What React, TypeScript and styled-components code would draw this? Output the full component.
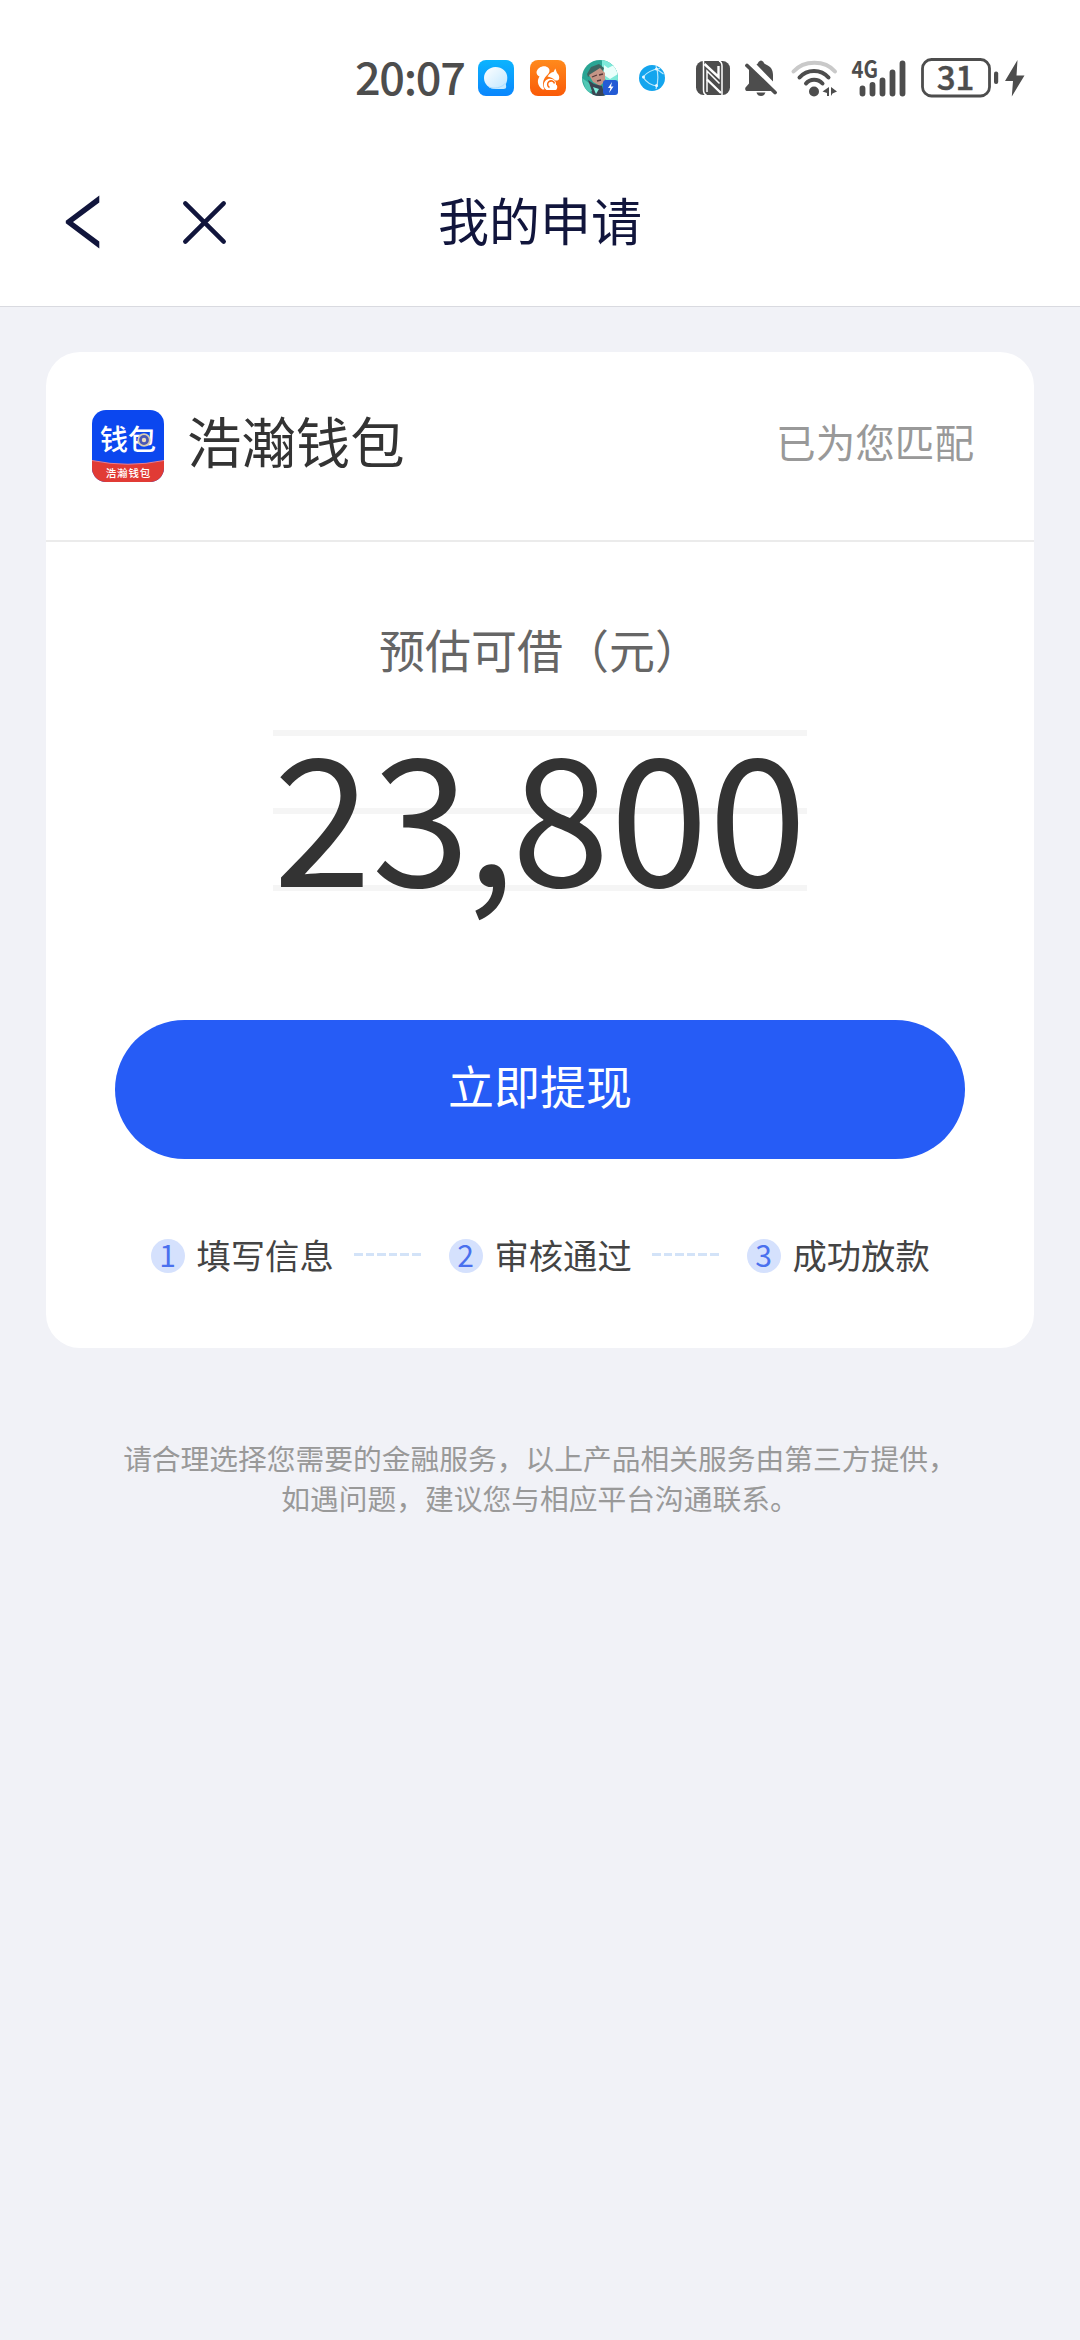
import React from "react";
import styled, { createGlobalStyle } from "styled-components";

const ink = "#4d4d4d";

const GlobalStyle = createGlobalStyle`
  * { box-sizing: border-box; }
  body {
    margin: 0;
    background: #f1f2f7;
    font-family: "Noto Sans CJK SC", "Noto Sans", sans-serif;
  }
  button { border: 0; padding: 0; background: none; font-family: inherit; }
  svg { display: block; flex: none; overflow: visible; }
`;

const Page = styled.div`
  width: 1080px;
  min-height: 2340px;
  background: #f1f2f7;
`;

const Top = styled.header`
  height: 307px;
  background: #fff;
  border-bottom: 1px solid #d9dae0;
`;

const StatusBar = styled.div`
  display: flex;
  align-items: center;
  height: 156px;
  padding-left: 355px;
`;

const Time = styled.span`
  width: 123px;
  margin-top: -5px;
  font-size: 45px;
  line-height: 66px;
  font-weight: 500;
  letter-spacing: -1.3px;
  color: ${ink};
`;

const Slot = styled.span<{ $gap: number }>`
  margin-left: ${(p) => p.$gap}px;
`;

const NavBar = styled.nav`
  display: grid;
  grid-template-columns: 1fr auto 1fr;
  align-items: center;
  height: 132px;
  padding: 0 65px;
`;

const NavActions = styled.div`
  display: flex;
  align-items: center;
  gap: 83px;
`;

const NavTitle = styled.h1`
  margin: -6px 0 0;
  font-size: 51px;
  line-height: 74px;
  font-weight: 400;
  color: #11153c;
`;

const Card = styled.section`
  margin: 45px 46px 0;
  height: 996px;
  border-radius: 34px;
  background: #fff;
`;

const CardHead = styled.div`
  display: flex;
  align-items: center;
  height: 190px;
  padding: 0 60px 0 46px;
  border-bottom: 2px solid #ebebeb;
`;

const BrandName = styled.span`
  margin: -13px 0 0 23px;
  font-size: 54.4px;
  line-height: 80px;
  color: #333;
`;

const MatchNote = styled.span`
  margin: -11px 0 0 auto;
  font-size: 39.6px;
  line-height: 60px;
  color: #999;
`;

const CardBody = styled.div`
  display: flex;
  flex-direction: column;
  align-items: center;
  padding-top: 73px;
`;

const Label = styled.div`
  font-size: 46px;
  line-height: 66px;
  color: #666;
`;

const Amount = styled.div`
  display: flex;
  justify-content: center;
  width: 534px;
  height: 161px;
  margin-top: 49px;
  background:
    linear-gradient(#f5f5f5, #f5f5f5) 0 0 / 100% 6px no-repeat,
    linear-gradient(#f5f5f5, #f5f5f5) 0 50% / 100% 6px no-repeat,
    linear-gradient(#f5f5f5, #f5f5f5) 0 100% / 100% 6px no-repeat;
  font-size: 177px;
  line-height: 161px;
  color: #333;
`;

const Digit = styled.span<{ $narrow: boolean }>`
  display: flex;
  justify-content: center;
  width: ${(p) => (p.$narrow ? 41 : 98.6)}px;
`;

const Withdraw = styled.button`
  width: 850px;
  height: 139px;
  margin-top: 129px;
  padding-bottom: 12px;
  border-radius: 70px;
  background: #265cf6;
  color: #fff;
  font-size: 46px;
  line-height: 66px;
`;

const Steps = styled.ol`
  display: flex;
  align-items: center;
  width: 779px;
  height: 46px;
  margin: 74px 0 0;
  padding: 0;
  list-style: none;
`;

const Step = styled.li`
  display: flex;
  align-items: center;
  font-size: 34.3px;
  line-height: 50px;
  color: #444;
`;

const StepNumber = styled.span`
  width: 34px;
  height: 34px;
  margin-right: 12px;
  border-radius: 50%;
  background: #d5e1fd;
  color: #4a70ee;
  font-size: 30px;
  line-height: 30px;
  text-align: center;
`;

const StepText = styled.span`
  width: 138px;
  margin-top: -4px;
  white-space: nowrap;
`;

const Dashes = styled.span`
  width: 67px;
  height: 3px;
  margin: -3px 28px 0 19px;
  background: repeating-linear-gradient(90deg, #d3e3f8 0 8.5px, transparent 8.5px 11.6px);
`;

const Disclaimer = styled.p`
  margin: 90px 0 0;
  text-align: center;
  font-size: 28.75px;
  line-height: 40px;
  color: #999;
`;

const ChatIcon = () => (
  <svg width="36" height="36" viewBox="0 0 36 36">
    <defs>
      <linearGradient id="chatBg" x1="0" y1="0" x2="0" y2="1">
        <stop offset="0" stopColor="#0cb4fe" />
        <stop offset="1" stopColor="#0a86fd" />
      </linearGradient>
      <linearGradient id="bubble" x1="0" y1="0" x2="1" y2="1">
        <stop offset="0" stopColor="#fff" />
        <stop offset="1" stopColor="#bfe6ff" />
      </linearGradient>
    </defs>
    <rect width="36" height="36" rx="8" fill="url(#chatBg)" />
    <path d="M17.500 7C24 7 29.300 11.500 29.300 17.500c0 3.500-.8 5-1.500 7 .7 2 .5 4-.8 4.200-2 .3-3 .3-9.500.3C11 29 6 24 6 18S11 7 17.500 7Z" fill="url(#bubble)" />
    <path d="M11 27c5 2.300 13 .8 16.500-4" fill="none" stroke="#a9dcff" strokeWidth="1" />
  </svg>
);

const SquirrelIcon = () => (
  <svg width="36" height="36" viewBox="0 0 36 36">
    <defs>
      <linearGradient id="ucBg" x1="0" y1="0" x2="0" y2="1">
        <stop offset="0" stopColor="#ff8a1c" />
        <stop offset="1" stopColor="#fa5a08" />
      </linearGradient>
    </defs>
    <rect width="36" height="36" rx="8" fill="url(#ucBg)" />
    <path d="M12.500 29.500C7 25.500 7 20 9.500 16.500c-2-1-3-2.500-3-4.500C8 6.500 15 4.500 18.500 8c1.800 2 1 4.500-.8 6.500C13.500 18.500 11.500 23 14.500 29.500Z" fill="#fff" />
    <path d="M17.500 16.500c2-3 4-4.500 6-4.500l1.800-3.500 1.700 4.500c1.800 1.500 2.700 4 2 6.200-.8 1.500-2.800 1.500-4 1-2-2.200-5-3-7.500-3.700Z" fill="#fff" />
    <path d="M13.800 25c0-3.800 3-6.300 6.200-6.300 4 0 6.500 3 6 6 2 .3 1.500 5-.5 5.300H16.500c-1.700-1-2.700-2.700-2.700-5Z" fill="#fff" />
    <path d="M19.500 27.500a3.500 3.500 0 1 1 5-4" fill="none" stroke="#fc6a10" strokeWidth="1.500" />
  </svg>
);

const AvatarIcon = () => (
  <svg width="36" height="36" viewBox="0 0 36 36">
    <defs>
      <clipPath id="avatarClip"><circle cx="18" cy="18" r="18" /></clipPath>
    </defs>
    <g clipPath="url(#avatarClip)">
      <rect width="36" height="36" fill="#2aa594" />
      <path d="M20 0h16v22H25l-5-8Z" fill="#7ee9da" />
      <path d="M22 5l4 3 6-3 4 9-8 5-6-4Z" fill="#eafffb" />
      <path d="M5 14 9 7l8-3 5 4-2 6-6-3-8 6Z" fill="#3d6662" />
      <path d="M7 15l11-7 5 5v8l-5 5-7-4Z" fill="#c59586" />
      <path d="m10 17 5-2m2 0 4-1m-6 7 4-1" stroke="#57383a" strokeWidth="1.300" />
      <path d="M6 20l6 4 8 2 3 10H11Z" fill="#3b4552" />
      <path d="M0 18l7 5 3 8-5 2Z" fill="#53c8b5" />
      <path d="M11 27l6 2-3 5Z" fill="#80f0dc" />
    </g>
    <rect x="21" y="20" width="15" height="15" rx="3" fill="#235bd5" />
    <path d="m30 22-4 6h2.500L27 33l4.500-6.500H29Z" fill="#fff" />
  </svg>
);

const GlobeIcon = () => (
  <svg width="26" height="26" viewBox="0 0 26 26">
    <circle cx="13" cy="13" r="13" fill="#14a5ee" />
    <g fill="none" stroke="#b9e8fd" strokeWidth="1.200">
      <path d="M17 1c2.500 6 2.500 16 0 23M4 12C8 7 13 4.500 21 3.500M4 12c3 5 8 8.500 15 9M17.500 4l7 5" />
    </g>
    <circle cx="4.500" cy="12" r="1.500" fill="#e9f8ff" />
    <circle cx="17.500" cy="4" r="1.500" fill="#e9f8ff" />
    <circle cx="17.500" cy="20.500" r="1.500" fill="#e9f8ff" />
  </svg>
);

const NfcIcon = () => (
  <svg width="34" height="34" viewBox="0 0 34 34">
    <rect width="34" height="34" rx="7.500" fill={ink} />
    <path d="M7.500 0V29q0 4 3 5M26 34V5q0-4-3-5" fill="none" stroke="#fff" strokeWidth="1.500" />
    <path d="M8.500 3 22.500 16V5M11 18.500 25 32" fill="none" stroke="#fff" strokeWidth="2.400" />
    <path d="M11 31V10L23.500 22.500" fill="none" stroke="#fff" strokeWidth="1.500" />
  </svg>
);

const MutedBellIcon = () => (
  <svg width="32" height="36" viewBox="0 0 32 36">
    <path d="M4 8 28 31H1.500Q-.5 30 .5 27.500L4 23.500Z" fill={ink} />
    <path d="M11.500 4.500Q13 3.500 13.500 2q2.500-3 5 0 0 1.500 2 2.300C26 6.500 28 10 28 15v6.500Z" fill={ink} />
    <path d="M2 5.500 30 32.500" stroke={ink} strokeWidth="3.800" strokeLinecap="round" />
    <path d="M11.500 32.500h9q-1 3.500-4.500 3.500t-4.500-3.500Z" fill={ink} />
  </svg>
);

const WifiIcon = () => (
  <svg width="48" height="37" viewBox="0 0 48 37">
    <g fill="none" strokeWidth="4" strokeLinecap="round">
      <path d="M2.500 11.500C13-.2 34-.2 44 11.500" stroke="#c9c9c9" />
      <path d="M8.500 17.500C16 8.700 30 8.700 37.500 17.500" stroke={ink} />
      <path d="M15 23.500c4-5 12-5 16.500 0" stroke={ink} />
    </g>
    <circle cx="23" cy="31.500" r="5" fill={ink} />
    <path d="M38 27v9h-2v-3l-4.500-1.500ZM40 27v9l1.500-2.500L46 31.500Z" fill={ink} />
  </svg>
);

const SignalIcon = () => (
  <svg width="55" height="37" viewBox="0 0 55 37">
    <text x="-.5" y="18" fontSize="23.500" fontWeight="700" fill={ink} textLength="26.500" lengthAdjust="spacingAndGlyphs">4G</text>
    <g stroke={ink} strokeWidth="5.800" strokeLinecap="round">
      <path d="M10.500 28.500v5M20.500 25v8.500M30.500 20.500v13M40.500 12.500v21M50.500 3.500v30" />
    </g>
  </svg>
);

const BatteryIcon = () => (
  <svg width="78" height="40" viewBox="0 0 78 40">
    <rect x="1.500" y="1.500" width="67" height="36.500" rx="9" fill="none" stroke={ink} strokeWidth="2.800" />
    <rect x="73" y="13.500" width="4.200" height="12.500" rx="2" fill={ink} />
    <text x="34.500" y="31.500" fontSize="33" fontWeight="500" textAnchor="middle" fill={ink} stroke={ink} strokeWidth="0.500">31</text>
  </svg>
);

const BoltIcon = () => (
  <svg width="20" height="37" viewBox="0 0 20 37">
    <path d="M12.500 0 0 21h8L6.800 36.500 19.500 15.500H11.500Z" fill={ink} />
  </svg>
);

const BackIcon = () => (
  <svg width="35" height="54" viewBox="0 0 35 54">
    <path d="M34.300.5v7L8 27l26.300 19.500v7L.8 28.200V25.800Z" fill="#11153c" />
  </svg>
);

const CloseIcon = () => (
  <svg width="43" height="43" viewBox="0 0 43 43">
    <path d="M2.300 2.300 40.700 40.700M40.700 2.300 2.300 40.700" stroke="#11153c" strokeWidth="4.500" strokeLinecap="round" />
  </svg>
);

const WalletLogo = () => (
  <svg width="72" height="72" viewBox="0 0 72 72">
    <defs>
      <clipPath id="logoClip"><rect width="72" height="72" rx="14" /></clipPath>
    </defs>
    <g clipPath="url(#logoClip)">
      <rect width="72" height="72" fill="#0b47ef" />
      <path d="M0 50.500Q36 58 72 50.500V72H0Z" fill="#e13b35" />
      <path d="M0 50.500Q36 58 72 50.500" fill="none" stroke="#ef7c86" strokeWidth="1" />
    </g>
    <text x="36" y="39.500" fontSize="28" fontWeight="500" textAnchor="middle" fill="#fff">钱包</text>
    <circle cx="52" cy="30" r="5.800" fill="#4a58b5" stroke="#d8ccb0" strokeWidth="1.800" />
    <circle cx="52" cy="30" r="2.200" fill="#e9dcc0" />
    <text x="36.400" y="67" fontSize="10.500" fontWeight="500" textAnchor="middle" fill="#fff" letterSpacing="0.8">浩瀚钱包</text>
  </svg>
);

const amount = "23,800";
const steps = ["填写信息", "审核通过", "成功放款"];

export default function App() {
  return (
    <Page>
      <GlobalStyle />
      <Top>
        <StatusBar>
          <Time>20:07</Time>
          <Slot $gap={0}><ChatIcon /></Slot>
          <Slot $gap={16}><SquirrelIcon /></Slot>
          <Slot $gap={16}><AvatarIcon /></Slot>
          <Slot $gap={21}><GlobeIcon /></Slot>
          <Slot $gap={31}><NfcIcon /></Slot>
          <Slot $gap={15}><MutedBellIcon /></Slot>
          <Slot $gap={14}><WifiIcon /></Slot>
          <Slot $gap={13}><SignalIcon /></Slot>
          <Slot $gap={14}><BatteryIcon /></Slot>
          <Slot $gap={6}><BoltIcon /></Slot>
        </StatusBar>
        <NavBar>
          <NavActions>
            <button aria-label="返回"><BackIcon /></button>
            <button aria-label="关闭"><CloseIcon /></button>
          </NavActions>
          <NavTitle>我的申请</NavTitle>
        </NavBar>
      </Top>
      <Card>
        <CardHead>
          <WalletLogo />
          <BrandName>浩瀚钱包</BrandName>
          <MatchNote>已为您匹配</MatchNote>
        </CardHead>
        <CardBody>
          <Label>预估可借（元）</Label>
          <Amount>
            {amount.split("").map((char, i) => (
              <Digit key={i} $narrow={char === ","}>{char}</Digit>
            ))}
          </Amount>
          <Withdraw>立即提现</Withdraw>
          <Steps>
            {steps.map((text, i) => (
              <Step key={text}>
                <StepNumber>{i + 1}</StepNumber>
                <StepText>{text}</StepText>
                {i < steps.length - 1 && <Dashes />}
              </Step>
            ))}
          </Steps>
        </CardBody>
      </Card>
      <Disclaimer>
        请合理选择您需要的金融服务，以上产品相关服务由第三方提供，
        <br />
        如遇问题，建议您与相应平台沟通联系。
      </Disclaimer>
    </Page>
  );
}
